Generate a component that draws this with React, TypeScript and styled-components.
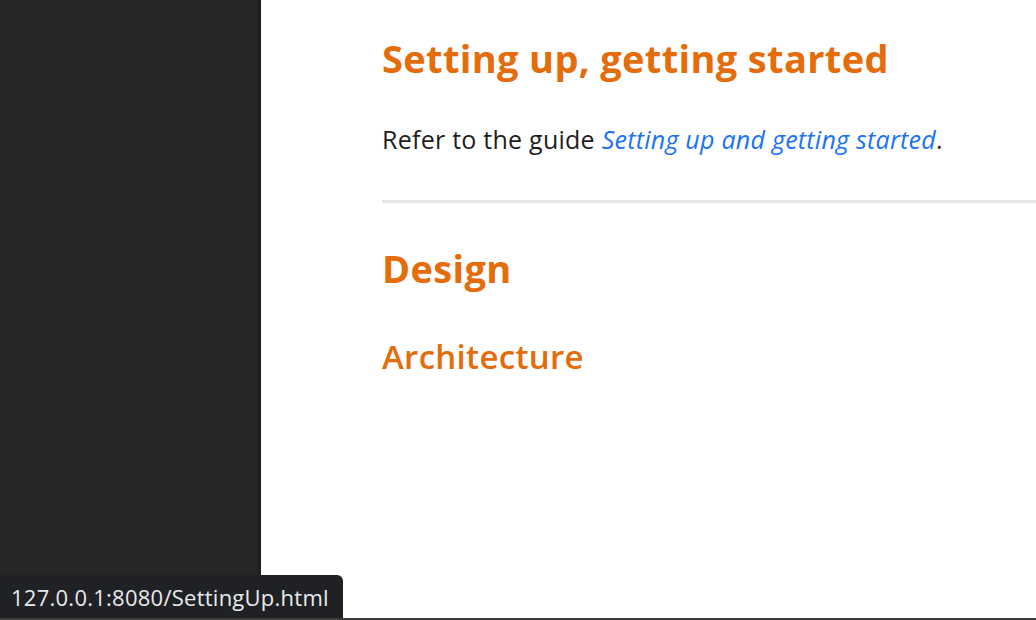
import React from "react";
import styled, { createGlobalStyle } from "styled-components";

const Global = createGlobalStyle`
  html, body { margin: 0; padding: 0; background: #ffffff; overflow: hidden; }
  body { font-family: "Open Sans", "Noto Sans", sans-serif; }
`;

const Page = styled.div`
  display: flex;
  height: 620px;
  width: 1036px;
  overflow: hidden;
`;

const Sidebar = styled.aside`
  flex: 0 0 261px;
  background: #262626;
  box-shadow: inset -4px 0 4px -2px rgba(0, 0, 0, 0.35);
`;

const Main = styled.main`
  flex: 1;
  padding: 32px 0 0 121px;
  min-width: 0;
`;

const Heading = styled.h1<{ $top?: number }>`
  margin: ${(p) => p.$top ?? 0}px 0 0;
  color: #e46c0a;
  font-size: 38px;
  font-weight: 700;
  line-height: 52px;
  letter-spacing: 0.35px;
  white-space: nowrap;
`;

const Para = styled.p`
  margin: 38px 0 0;
  font-size: 25px;
  line-height: 34px;
  color: #1e1e1e;
  white-space: nowrap;
  letter-spacing: 0.25px;
`;

const GuideLink = styled.a`
  color: #1a73f5;
  font-style: italic;
  text-decoration: none;
`;

const Rule = styled.hr`
  margin: 44px 0 0;
  border: 0;
  height: 3px;
  background: #e5e5e5;
`;

const SubHeading = styled.h3`
  margin: 41px 0 0;
  color: #e46c0a;
  font-size: 33px;
  font-weight: 600;
  line-height: 44px;
  letter-spacing: 0.3px;
`;

const StatusBubble = styled.div`
  position: fixed;
  left: 0;
  bottom: 2px;
  width: 343px;
  height: 43px;
  box-sizing: border-box;
  background: #202124;
  color: #e8eaed;
  border-top-right-radius: 6px;
  padding-left: 11px;
  display: flex;
  align-items: center;
  font-size: 22px;
  letter-spacing: 0.25px;
  white-space: nowrap;
`;

const BottomEdge = styled.div`
  position: fixed;
  left: 0;
  right: 0;
  bottom: 0;
  height: 2px;
  background: #3c3c3c;
`;

export default function App() {
  return (
    <>
      <Global />
      <Page>
        <Sidebar />
        <Main>
          <Heading>Setting up, getting started</Heading>
          <Para>
            Refer to the guide <GuideLink href="#">Setting up and getting started</GuideLink>.
          </Para>
          <Rule />
          <Heading as="h2" $top={39}>Design</Heading>
          <SubHeading>Architecture</SubHeading>
        </Main>
      </Page>
      <StatusBubble>127.0.0.1:8080/SettingUp.html</StatusBubble>
      <BottomEdge />
    </>
  );
}
